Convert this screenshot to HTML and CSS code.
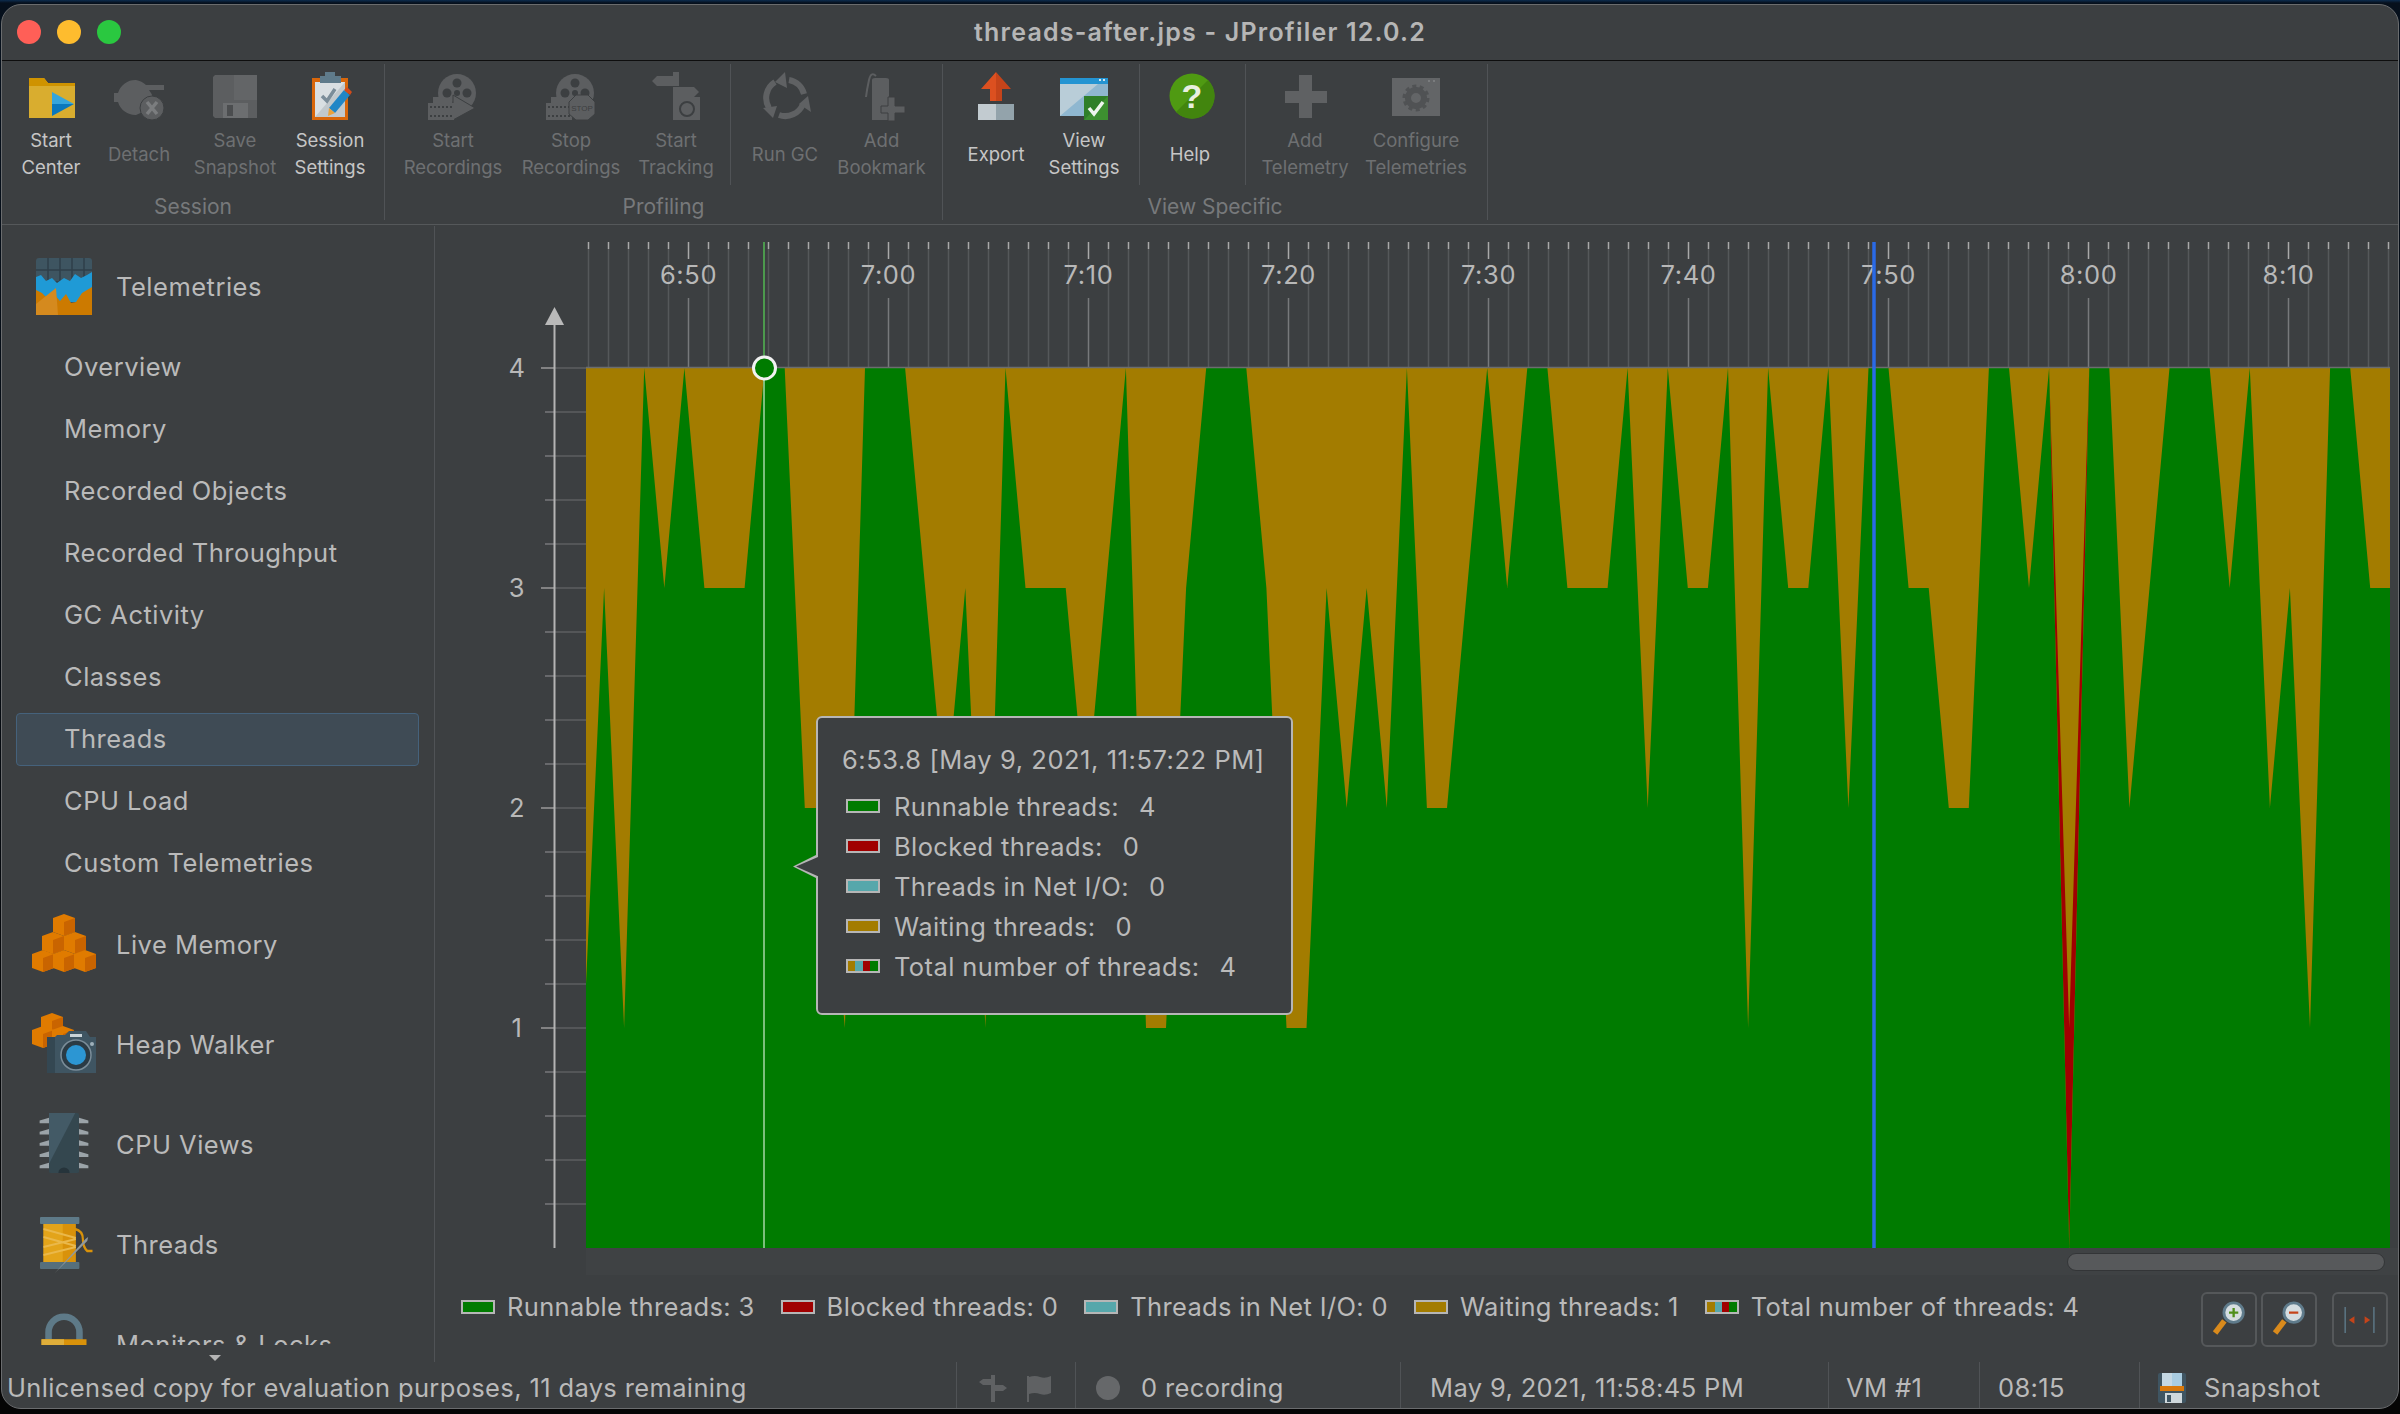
FILE: index.html
```html
<!DOCTYPE html>
<html lang="en">
<head>
  <meta charset="UTF-8">
  <title>threads-after.jps - JProfiler 12.0.2</title>
  <link rel="stylesheet" href="styles.css">
</head>
<body>
  <svg class="defs">
    <defs>
      <symbol id="cube" viewBox="0 0 22 22">
        <polygon points="11,0 22,4 22,18 11,22 0,18 0,4" fill="#e07b00"/>
        <polygon points="11,8 22,4 22,18 11,22" fill="#c96400"/>
      </symbol>
      <g id="reel">
        <circle r="19" fill="#5c5e60"/>
        <circle r="3" fill="#3c3f41"/>
        <circle cy="-10" r="4.5" fill="#3c3f41"/>
        <circle cy="10" r="4.5" fill="#3c3f41"/>
        <circle cx="-10" r="4.5" fill="#3c3f41"/>
        <circle cx="10" r="4.5" fill="#3c3f41"/>
      </g>
      <g id="film">
        <rect width="26" height="17" fill="#5c5e60"/>
        <rect x="5" y="-6" width="9" height="7" fill="#5c5e60"/>
        <path d="M2 4h22M2 13h22" stroke="#3c3f41" stroke-width="2" stroke-dasharray="2 2"/>
      </g>
    </defs>
  </svg>

  <div class="window">
    <header class="titlebar">
      <div class="lights">
        <span class="light red"></span>
        <span class="light yellow"></span>
        <span class="light green"></span>
      </div>
      <div class="title">threads-after.jps - JProfiler 12.0.2</div>
    </header>

    <div class="toolbar">
      <section class="group group-session">
        <div class="tools">
          <div class="set set-session">
            <div class="tool">
              <svg class="tool-icon" viewBox="0 0 60 56">
                <path d="M8 10h15l4 5h27v35H8z" fill="#d9ad2f"/>
                <path d="M8 10h15l4 5h27v3H8z" fill="#cf9300"/>
                <polygon points="31,24 53,36 31,36" fill="#35a5dc"/>
                <polygon points="31,36 53,36 31,48" fill="#0a78bd"/>
              </svg>
              <div class="tool-label">Start<br>Center</div>
            </div>
            <div class="tool off">
              <svg class="tool-icon" viewBox="0 0 60 56">
                <path d="M27 9v3a18 18 0 0 0-18 13H5v9h4a18 18 0 0 0 18 13z" fill="#5c5e60"/>
                <path d="M27 12a18 18 0 0 1 10 5h18v5H40a18 18 0 0 1 3 18l-16 7z" fill="#5c5e60"/>
                <circle cx="43" cy="40" r="12" fill="#5c5e60" stroke="#3c3f41" stroke-width="1"/>
                <path d="M38 34l10 12M48 34L38 46" stroke="#7b7d7f" stroke-width="3.5"/>
              </svg>
              <div class="tool-label">Detach</div>
            </div>
            <div class="tool off">
              <svg class="tool-icon" viewBox="0 0 60 56">
                <path d="M10 7h42v43H10l-2-2V9z" fill="#5c5e60"/>
                <rect x="29" y="7" width="23" height="25" fill="#636567"/>
                <rect x="18" y="35" width="25" height="15" fill="#6c6e70"/>
                <rect x="22" y="37" width="6" height="11" fill="#4b4d4f"/>
              </svg>
              <div class="tool-label">Save<br>Snapshot</div>
            </div>
            <div class="tool">
              <svg class="tool-icon" viewBox="0 0 60 56">
                <rect x="12" y="10" width="36" height="42" fill="#d8660a"/>
                <rect x="15" y="14" width="30" height="35" fill="#d9dfe2"/>
                <polygon points="15,49 45,14 45,49" fill="#c1c8cc"/>
                <path d="M25 4h10v4h6v7H20V8h5z" fill="#5f7b8b"/>
                <path d="M22 28l5 5 8-12" fill="none" stroke="#7b8d99" stroke-width="3.5"/>
                <polygon points="44,22 50,27 35,45 29,40" fill="#2186c6"/>
                <polygon points="44,22 47,19 52,24 50,27" fill="#d24b1a"/>
                <polygon points="29,40 35,45 28,48" fill="#e9a23c"/>
              </svg>
              <div class="tool-label">Session<br>Settings</div>
            </div>
          </div>
        </div>
        <div class="group-label">Session</div>
      </section>

      <section class="group group-profiling">
        <div class="tools">
          <div class="set set-rec">
            <div class="tool off">
              <svg class="tool-icon" viewBox="0 0 60 56">
                <use href="#reel" x="34" y="25"/>
                <polygon points="30,27 52,40 30,52" fill="#5c5e60" stroke="#3c3f41"/>
                <use href="#film" x="5" y="35"/>
              </svg>
              <div class="tool-label">Start<br>Recordings</div>
            </div>
            <div class="tool off">
              <svg class="tool-icon" viewBox="0 0 60 56">
                <use href="#reel" x="34" y="25"/>
                <use href="#film" x="5" y="35"/>
                <polygon points="35,27 47,27 54,34 54,46 47,52 35,52 28,46 28,34" fill="#5c5e60" stroke="#3c3f41"/>
                <text class="stop" x="41" y="43" text-anchor="middle">STOP</text>
              </svg>
              <div class="tool-label">Stop<br>Recordings</div>
            </div>
            <div class="tool off">
              <svg class="tool-icon" viewBox="0 0 60 56">
                <path d="M27 4h6v4h-6zM11 8h22v10H11l-5-5z" fill="#5c5e60"/>
                <path d="M27 19h21l5 5-5 5H27z" fill="#5c5e60"/>
                <rect x="27" y="29" width="27" height="23" fill="#5c5e60"/>
                <circle cx="41" cy="41" r="7" fill="none" stroke="#3c3f41" stroke-width="2"/>
              </svg>
              <div class="tool-label">Start<br>Tracking</div>
            </div>
          </div>
          <div class="set set-gc">
            <div class="tool off">
              <svg class="tool-icon" viewBox="0 0 60 56">
                <path d="M34 12a19 19 0 0 1 15 14M48 36a19 19 0 0 1-24 11M14 40a19 19 0 0 1 6-26" fill="none" stroke="#5f6163" stroke-width="6"/>
                <polygon points="30,4 32,20 20,14" fill="#5f6163"/>
                <polygon points="53,28 44,36 56,44" fill="#5f6163"/>
                <polygon points="8,40 22,38 18,50" fill="#5f6163"/>
              </svg>
              <div class="tool-label">Run GC</div>
            </div>
            <div class="tool off">
              <svg class="tool-icon" viewBox="0 0 60 56">
                <path d="M20 12q0-2 3-2h11q3 0 3 2v40H20z" fill="#5c5e60"/>
                <path d="M24 8q-5-5-7 4t-3 17" fill="none" stroke="#5c5e60" stroke-width="2"/>
                <path d="M36 29h7v9h10v7H43v8h-7v-8H29v-7h7z" fill="#5c5e60" stroke="#3c3f41"/>
              </svg>
              <div class="tool-label">Add<br>Bookmark</div>
            </div>
          </div>
        </div>
        <div class="group-label">Profiling</div>
      </section>

      <section class="group group-view">
        <div class="tools">
          <div class="set set-export">
            <div class="tool">
              <svg class="tool-icon" viewBox="0 0 60 56">
                <polygon points="30,4 45,21 36,21 36,33 30,33" fill="#c5441a"/>
                <polygon points="30,4 15,21 24,21 24,33 30,33" fill="#dc5020"/>
                <rect x="12" y="36" width="18" height="16" fill="#c2cbd0"/>
                <rect x="30" y="36" width="18" height="16" fill="#93a3ab"/>
              </svg>
              <div class="tool-label">Export</div>
            </div>
            <div class="tool">
              <svg class="tool-icon" viewBox="0 0 60 56">
                <rect x="6" y="10" width="48" height="38" fill="#b9cdd8"/>
                <polygon points="6,48 44,16 54,16 54,48" fill="#8fb7d0"/>
                <rect x="6" y="10" width="48" height="6" fill="#2494d2"/>
                <path d="M45 12h2M49 12h2" stroke="#d5e6f0" stroke-width="2"/>
                <rect x="30" y="28" width="24" height="24" fill="#2f7f29"/>
                <polygon points="54,28 54,52 30,52" fill="#3d9030"/>
                <path d="M35 40l5 6 9-12" fill="none" stroke="#eef5ee" stroke-width="3.5"/>
              </svg>
              <div class="tool-label">View<br>Settings</div>
            </div>
          </div>
          <div class="set set-help">
            <div class="tool">
              <svg class="tool-icon" viewBox="0 0 60 56">
                <circle cx="32" cy="28" r="22.5" fill="#4f9a12"/>
                <path d="M48 12a22.5 22.5 0 0 1-32 32z" fill="#42850e"/>
                <text class="help-mark" x="32" y="40" text-anchor="middle">?</text>
              </svg>
              <div class="tool-label">Help</div>
            </div>
          </div>
          <div class="set set-add">
            <div class="tool off">
              <svg class="tool-icon" viewBox="0 0 60 56">
                <path d="M24 7h13v16h15v12H37v15H24V35H10V23h14z" fill="#5f6163"/>
              </svg>
              <div class="tool-label">Add<br>Telemetry</div>
            </div>
            <div class="tool off">
              <svg class="tool-icon" viewBox="0 0 60 56">
                <rect x="6" y="10" width="48" height="38" fill="#636567"/>
                <path d="M42 13h2M47 13h2" stroke="#7a7c7e" stroke-width="2"/>
                <circle cx="30" cy="30" r="8" fill="none" stroke="#505254" stroke-width="6"/>
                <circle cx="30" cy="30" r="12" fill="none" stroke="#505254" stroke-width="3" stroke-dasharray="4 3.5"/>
              </svg>
              <div class="tool-label">Configure<br>Telemetries</div>
            </div>
          </div>
        </div>
        <div class="group-label">View Specific</div>
      </section>
    </div>

    <div class="content">
      <nav class="sidebar">
        <div class="nav-section nav-head">
          <svg class="nav-icon" viewBox="0 0 56 57">
            <rect width="56" height="57" rx="3" fill="#3e5561"/>
            <path d="M0 12h56M0 24h56M12 0v30M24 0v30M36 0v30M48 0v30" stroke="#2f3f49" stroke-width="1.5"/>
            <path d="M0 19l5-2 5 6 6-3 5 5 7-5 6 3 5-7 6 4 6-3 5-3v30H0z" fill="#1f9ad6"/>
            <path d="M0 32l6 3 5 5 7-4 6 7 6-7 5 9 5-1 6-9 5-3 5-3v35H0z" fill="#cc7a00"/>
            <polygon points="0,57 0,46 20,30 22,57" fill="#d58a1e"/>
          </svg>
          <span>Telemetries</span>
        </div>
        <a class="nav-item">Overview</a>
        <a class="nav-item">Memory</a>
        <a class="nav-item">Recorded Objects</a>
        <a class="nav-item">Recorded Throughput</a>
        <a class="nav-item">GC Activity</a>
        <a class="nav-item">Classes</a>
        <a class="nav-item selected">Threads</a>
        <a class="nav-item">CPU Load</a>
        <a class="nav-item">Custom Telemetries</a>

        <div class="nav-section">
          <svg class="nav-icon" viewBox="0 0 64 58">
            <use href="#cube" x="21" y="0" width="22" height="22"/>
            <use href="#cube" x="10" y="18" width="22" height="22"/>
            <use href="#cube" x="32" y="18" width="22" height="22"/>
            <use href="#cube" x="0" y="36" width="22" height="22"/>
            <use href="#cube" x="21" y="36" width="22" height="22"/>
            <use href="#cube" x="42" y="36" width="22" height="22"/>
          </svg>
          <span>Live Memory</span>
        </div>
        <div class="nav-section">
          <svg class="nav-icon" viewBox="0 0 64 60">
            <use href="#cube" x="9" y="0" width="22" height="22"/>
            <use href="#cube" x="0" y="13" width="22" height="22"/>
            <use href="#cube" x="20" y="13" width="22" height="22"/>
            <path d="M15 24h8l2-2h8l4-4h17l4 6h6v36H15z" fill="#3f5562"/>
            <path d="M15 60V24h8v36z" fill="#344752"/>
            <rect x="38" y="21" width="12" height="3" fill="#c9d3d8"/>
            <circle cx="44" cy="42" r="15" fill="#2b3b45" stroke="#7b8d99" stroke-width="1.5"/>
            <circle cx="44" cy="42" r="10" fill="#2c96d3"/>
            <circle cx="60" cy="31" r="2" fill="#9fb0ba"/>
          </svg>
          <span>Heap Walker</span>
        </div>
        <div class="nav-section">
          <svg class="nav-icon" viewBox="0 0 64 64">
            <path d="M6 8l10-3v6l-10 0zM6 20l10-3v6H6zM6 32l10-3v6H6zM6 44l10-3v6H6zM6 56l10-3v6H6z" fill="#9ba3a8"/>
            <path d="M58 8l-10-3v6h10zM58 20l-10-3v6h10zM58 32l-10-3v6h10zM58 44l-10-3v6h10zM58 56l-10-3v6h10z" fill="#9ba3a8"/>
            <rect x="16" y="0" width="32" height="64" rx="2" fill="#34474f"/>
            <polygon points="16,0 44,0 16,54" fill="#435a66"/>
            <path d="M26 64a6 6 0 0 1 12 0z" fill="#26343b"/>
          </svg>
          <span>CPU Views</span>
        </div>
        <div class="nav-section">
          <svg class="nav-icon" viewBox="0 0 64 60">
            <g transform="translate(8 0) scale(.875 1)">
              <rect x="4" y="11" width="37" height="38" fill="#d9920a"/>
              <rect x="4" y="11" width="22" height="38" fill="#e3a41a"/>
              <path d="M4 16l37 9M4 24l37 9M4 34l37-8M4 42l37-8" stroke="#eab84a" stroke-width="2"/>
              <rect y="4" width="45" height="7" rx="1" fill="#5e7a88"/>
              <rect y="49" width="45" height="7" rx="1" fill="#566f7c"/>
              <path d="M40 16q9 2 9 10t5 12h6" fill="none" stroke="#d9920a" stroke-width="2.5"/>
              <polygon points="17,60 52,26 55,24 54,28" fill="#8f989d"/>
            </g>
          </svg>
          <span>Threads</span>
        </div>
        <div class="nav-section">
          <svg class="nav-icon" viewBox="0 0 64 64">
            <path d="M15.5 30V20.5a16.5 16.5 0 0 1 33 0V30" fill="none" stroke="#5e7a88" stroke-width="7"/>
            <rect x="8" y="28" width="48" height="30" fill="#d9920a"/>
            <rect x="8" y="28" width="24" height="30" fill="#dfae3a"/>
          </svg>
          <span>Monitors &amp; Locks</span>
        </div>
      </nav>
      <div class="nav-more"></div>

      <main class="main">
        <div class="chart-wrap">
          <svg id="chart" class="chart" viewBox="435 225 1963 1023"></svg>
          <div class="tooltip">
            <span class="tip-arrow"></span>
            <div class="tip-time">6:53.8 [May 9, 2021, 11:57:22 PM]</div>
            <div class="tip-row"><i class="swatch runnable"></i>Runnable threads:<b>4</b></div>
            <div class="tip-row"><i class="swatch blocked"></i>Blocked threads:<b>0</b></div>
            <div class="tip-row"><i class="swatch netio"></i>Threads in Net I/O:<b>0</b></div>
            <div class="tip-row"><i class="swatch waiting"></i>Waiting threads:<b>0</b></div>
            <div class="tip-row"><i class="swatch total"></i>Total number of threads:<b>4</b></div>
          </div>
        </div>
        <div class="hscroll"><div class="hscroll-thumb"></div></div>
        <div class="legend-row">
          <div class="legend">
            <span class="legend-item"><i class="swatch runnable"></i>Runnable threads: 3</span>
            <span class="legend-item"><i class="swatch blocked"></i>Blocked threads: 0</span>
            <span class="legend-item"><i class="swatch netio"></i>Threads in Net I/O: 0</span>
            <span class="legend-item"><i class="swatch waiting"></i>Waiting threads: 1</span>
            <span class="legend-item"><i class="swatch total"></i>Total number of threads: 4</span>
          </div>
          <div class="zoom-btns">
            <button class="zoom-btn">
              <svg viewBox="0 0 56 55">
                <path d="M13 42l10-13" stroke="#d98a1c" stroke-width="6"/>
                <circle cx="33" cy="20" r="10.5" fill="#d5dde0" stroke="#5f7b8b" stroke-width="3"/>
                <path d="M28 20h10M33 15v10" stroke="#4f8f1c" stroke-width="2.5"/>
              </svg>
            </button>
            <button class="zoom-btn">
              <svg viewBox="0 0 56 55">
                <path d="M13 42l10-13" stroke="#d98a1c" stroke-width="6"/>
                <circle cx="33" cy="20" r="10.5" fill="#d5dde0" stroke="#5f7b8b" stroke-width="3"/>
                <path d="M28 20h10" stroke="#c5441a" stroke-width="2.5"/>
              </svg>
            </button>
            <button class="zoom-btn zoom-fit">
              <svg viewBox="0 0 56 55">
                <path d="M12 14v28M43 14v28" stroke="#5f7b8b" stroke-width="1.5"/>
                <polygon points="16,28 22,24 22,32" fill="#c5441a"/>
                <polygon points="39,28 33,24 33,32" fill="#c5441a"/>
              </svg>
            </button>
          </div>
        </div>
      </main>
    </div>

    <footer class="statusbar">
      <div class="stat stat-msg">Unlicensed copy for evaluation purposes, 11 days remaining</div>
      <div class="stat stat-icons">
        <svg width="30" height="28" viewBox="0 0 30 28">
          <path d="M13 1h4v4h-4zM5 5h12v6H5L1 8zM13 11h12l4 3-4 3H17v11h-4z" fill="#5f6163"/>
        </svg>
        <svg width="26" height="28" viewBox="0 0 26 28">
          <path d="M1 2h2v26H1zM3 3q6-2 11 0t11-1v17q-6 3-11 1t-11 0z" fill="#5f6163"/>
        </svg>
      </div>
      <div class="stat stat-rec"><span class="rec-dot"></span>0 recording</div>
      <div class="stat stat-date">May 9, 2021, 11:58:45 PM</div>
      <div class="stat stat-vm">VM #1</div>
      <div class="stat stat-time">08:15</div>
      <div class="stat stat-snap">
        <svg width="28" height="30" viewBox="0 0 28 30">
          <rect width="28" height="30" rx="2" fill="#3f5562"/>
          <rect x="4" width="20" height="13" fill="#a9cce0"/>
          <rect x="4" width="10" height="13" fill="#c5d8e3"/>
          <rect x="2" y="13" width="24" height="5" fill="#d9780a"/>
          <rect x="7" y="20" width="17" height="10" fill="#cfd8dc"/>
          <rect x="9" y="22" width="4" height="7" fill="#3f5562"/>
        </svg>
        <span>Snapshot</span>
      </div>
    </footer>
  </div>

  <script src="chart.js"></script>
</body>
</html>
```

FILE: styles.css
```css
/* Reset */
* {
  margin: 0;
  padding: 0;
  box-sizing: border-box;
}

body {
  width: 2400px;
  height: 1414px;
  overflow: hidden;
  padding: 4px 1px 0;
  background: linear-gradient(180deg, #0d2c4e 0, #06101c 3px, #050505 1408px);
  font-family: Inter, "Noto Sans", sans-serif;
  color: #bababa;
}

.defs {
  position: absolute;
  width: 0;
  height: 0;
}

.window {
  display: flex;
  flex-direction: column;
  height: 1405px;
  background: #3c3f41;
  border: 1px solid #6a6c6e;
  border-radius: 20px;
  overflow: hidden;
}

/* Title bar */
.titlebar {
  position: relative;
  flex: 0 0 56px;
  display: flex;
  align-items: center;
  justify-content: center;
  padding-bottom: 2px;
  border-bottom: 1px solid #0e0e0e;
}

.lights {
  position: absolute;
  left: 15px;
  top: 15px;
  display: flex;
  gap: 16px;
}

.light {
  width: 24px;
  height: 24px;
  border-radius: 50%;
}

.light.red { background: #ff5f57; }
.light.yellow { background: #febc2e; }
.light.green { background: #2ac840; }

.title {
  font-size: 25px;
  font-weight: 600;
  letter-spacing: 1.2px;
  color: #b6b6b6;
}

/* Toolbar */
.toolbar {
  flex: 0 0 164px;
  display: flex;
  border-bottom: 1px solid #55585a;
}

.group {
  display: flex;
  flex-direction: column;
  height: 156px;
  margin-top: 3px;
  border-right: 1px solid #505356;
}

.group-session { width: 383px; }
.group-profiling { width: 558px; }
.group-view { width: 545px; }

.tools {
  display: flex;
  height: 121px;
}

.set {
  display: grid;
  border-right: 1px solid #505356;
}

.set:last-child { border-right: none; }

.set-session { grid-template-columns: 98px 78px 114px 76px; }
.set-rec { width: 346px; grid-template-columns: 136px 100px 110px; }
.set-gc { grid-template-columns: 108px 85px; }
.set-export { width: 197px; grid-template-columns: 106px 70px; }
.set-help { width: 106px; grid-template-columns: 100px; }
.set-add { grid-template-columns: 118px 104px; }

.tool {
  display: flex;
  flex-direction: column;
  align-items: center;
  padding-top: 4px;
  white-space: nowrap;
}

.tool-icon {
  width: 60px;
  height: 56px;
  flex: none;
}

.tool-label {
  height: 54px;
  margin-top: 3px;
  display: flex;
  align-items: center;
  text-align: center;
  font-size: 18.5px;
  line-height: 27px;
  color: #c6c6c6;
}

.tool.off .tool-label { color: #6e7072; }

.group-label {
  padding-top: 9px;
  text-align: center;
  font-size: 21px;
  line-height: 26px;
  color: #77797b;
}

.stop {
  font-family: "Liberation Sans", sans-serif;
  font-size: 8px;
  fill: #3c3f41;
}

.help-mark {
  font-family: "Liberation Sans", sans-serif;
  font-size: 34px;
  font-weight: 700;
  fill: #e8efe0;
}

/* Left navigation */
.content {
  position: relative;
  flex: 1;
  display: flex;
  min-height: 0;
}

.sidebar {
  flex: 0 0 433px;
  display: flex;
  flex-direction: column;
  height: 1120px;
  overflow: hidden;
  font-size: 25.5px;
  letter-spacing: 0.5px;
}

.nav-more {
  position: absolute;
  left: 207px;
  top: 1130px;
  border-left: 6px solid transparent;
  border-right: 6px solid transparent;
  border-top: 6px solid #b5b5b5;
}

.nav-section {
  position: relative;
  flex: none;
  display: flex;
  align-items: center;
  height: 100px;
  padding-left: 114px;
}

.nav-head {
  height: 111px;
  padding-top: 12px;
}

.nav-icon {
  position: absolute;
  left: 30px;
  top: 19px;
  width: 64px;
  height: 60px;
}

.nav-head .nav-icon {
  left: 34px;
  top: 33px;
  width: 56px;
  height: 57px;
}

.nav-item {
  flex: none;
  display: block;
  height: 53px;
  margin: 4.5px 16px 4.5px 14px;
  padding-left: 48px;
  line-height: 51px;
}

.nav-item.selected {
  background: #3f4b55;
  border: 1px solid #45627c;
  border-radius: 4px;
  padding-left: 47px;
  line-height: 49px;
}

.content::before {
  content: "";
  position: absolute;
  left: 432px;
  top: 1px;
  bottom: 0;
  width: 1px;
  background: #505356;
}

/* Chart */
.main {
  flex: 1;
  display: flex;
  flex-direction: column;
  min-width: 0;
}

.chart-wrap {
  position: relative;
  height: 1023px;
}

.chart {
  display: block;
  width: 1963px;
  height: 1023px;
  font-family: Inter, "Noto Sans", sans-serif;
}

.axis-label {
  font-size: 25.5px;
  letter-spacing: 0.6px;
  fill: #b8b8b8;
}

.tooltip {
  position: absolute;
  left: 381px;
  top: 491px;
  width: 477px;
  height: 299px;
  padding: 22px 0 0 24px;
  background: #3c3f41;
  border: 2px solid #b6b6b6;
  border-radius: 6px;
  font-size: 25.5px;
  letter-spacing: 0.4px;
}

.tip-arrow {
  position: absolute;
  left: -25px;
  top: 136px;
  width: 25px;
  height: 25px;
  background: #b6b6b6;
  clip-path: polygon(0 50%, 100% 0, 100% 100%);
}

.tip-arrow::after {
  content: "";
  position: absolute;
  left: 3px;
  top: 2px;
  width: 24px;
  height: 21px;
  background: #3c3f41;
  clip-path: polygon(0 50%, 100% 0, 100% 100%);
}

.tip-time {
  height: 40px;
  line-height: 40px;
  margin-bottom: 6px;
  letter-spacing: 0.55px;
}

.tip-row {
  display: flex;
  align-items: center;
  height: 40px;
  padding-left: 4px;
}

.tip-row b {
  margin-left: 20px;
  font-weight: 400;
}

.tip-row .swatch { margin-right: 14px; }

.swatch {
  display: inline-block;
  flex: none;
  width: 34px;
  height: 14px;
  border: 2px solid #b6b6b6;
}

.swatch.runnable { background: #007b00; }
.swatch.blocked { background: #a00000; }
.swatch.netio { background: #56a7ab; }
.swatch.waiting { background: #a37c00; }
.swatch.total {
  background: linear-gradient(90deg, #a37c00 25%, #56a7ab 25% 50%, #a00000 50% 75%, #007b00 75%);
}

/* Horizontal scroll bar */
.hscroll {
  height: 27px;
  margin-left: 151px;
  padding: 5px 0 0 1481px;
  background: #3f4244;
}

.hscroll-thumb {
  width: 318px;
  height: 18px;
  background: #57595b;
  border: 1px solid #333537;
  border-radius: 9px;
}

/* Legend row */
.legend-row {
  flex: 1;
  display: flex;
  justify-content: space-between;
  align-items: flex-start;
  padding: 17px 10px 0 26px;
}

.legend {
  display: flex;
  gap: 26px;
  font-size: 25.5px;
  letter-spacing: 0.34px;
  line-height: 30px;
}

.legend-item {
  display: flex;
  align-items: center;
  gap: 12px;
  white-space: nowrap;
}

.zoom-btns {
  display: flex;
  gap: 4px;
}

.zoom-btn {
  width: 56px;
  height: 55px;
  background: none;
  border: 2px solid #55585a;
  border-radius: 6px;
}

.zoom-btn svg {
  display: block;
  width: 100%;
  height: 100%;
}

.zoom-fit { margin-left: 11px; }

/* Status bar */
.statusbar {
  flex: 0 0 43px;
  display: flex;
  align-items: stretch;
  font-size: 25.5px;
  letter-spacing: 0.36px;
  line-height: 41px;
}

.stat {
  display: flex;
  align-items: center;
  padding-top: 5px;
  white-space: nowrap;
  border-left: 1px solid #505356;
}

.stat-msg { width: 954px; padding-left: 5px; border-left: none; }
.stat-icons { width: 119px; padding-left: 21px; gap: 18px; }
.stat-rec { width: 325px; padding-left: 20px; }
.stat-date { width: 428px; padding-left: 29px; }
.stat-vm { width: 151px; padding-left: 17px; }
.stat-time { width: 160px; padding-left: 18px; }
.stat-snap { flex: 1; padding-left: 18px; gap: 18px; }

.rec-dot {
  width: 24px;
  height: 24px;
  margin-right: 21px;
  border-radius: 50%;
  background: #66686a;
}
```

FILE: chart.js
```js
// thread counts per sample, read off the graph
const runnable = [1,3,1,4,3,4,3,3,3,4,4,2,2,1,4,4,4,3,2,3,1,4,3,3,3,2,3,4,1,1,3,4,4,4,3,1,1,3,2,3,2,4,2,2,3,4,3,4,4,3,3,3,4,2,4,3,3,4,1,4,3,3,4,2,4,4,3,3,2,2,4,4,3,4,0,4,4,2,3,4,4,4,3,4,2,3,1,4,4,3,3];
const labels = ['6:50','7:00','7:10','7:20','7:30','7:40','7:50','8:00','8:10'];

const sx = k => 584 + 20.07 * k;
const sy = v => 1248 - 220 * v;

function line(x1, y1, x2, y2, color, w) {
  return `<line x1="${x1}" y1="${y1}" x2="${x2}" y2="${y2}" stroke="${color}" stroke-width="${w || 1.5}"/>`;
}

let out = '<clipPath id="plot"><rect x="586" y="368" width="1804" height="880"/></clipPath>';

// time ruler
for (let i = 0; i <= 90; i++) {
  const x = 588.5 + 20 * i;
  const major = i % 10 === 5;
  out += line(x, 242, x, major ? 259 : 249, '#a9a9a9');
  out += line(x, major ? 298 : 249, x, 368, major ? '#77797b' : '#55585a');
}
labels.forEach((t, i) => {
  out += `<text class="axis-label" x="${688.5 + 200 * i}" y="284" text-anchor="middle">${t}</text>`;
});

// value axis
for (let i = 0; i < 20; i++) {
  const y = 368 + 44 * i;
  const major = i % 5 === 0;
  out += line(major ? 541 : 545, y, 554, y, major ? '#9a9a9a' : '#77797b');
  out += line(554, y, 586, y, '#5c5f61');
}
out += line(554.5, 322, 554.5, 1248, '#b4b4b4', 2);
out += '<polygon points="554.5,307 564,325 545,325" fill="#b9b9b9"/>';
[4, 3, 2, 1].forEach(v => {
  out += `<text class="axis-label" x="517" y="${sy(v) + 9}" text-anchor="middle">${v}</text>`;
});

// stacked areas
let pts = runnable.map((v, k) => `${sx(k).toFixed(1)},${sy(v)}`).join(' ');
pts += ` ${sx(90)},1248 ${sx(0)},1248`;
const peak = 74;
const red = `${sx(peak - 1)},${sy(4)} ${sx(peak)},${sy(1)} ${sx(peak + 1)},${sy(4)} ${sx(peak)},${sy(0)}`;
out += '<g clip-path="url(#plot)">';
out += '<rect x="586" y="368" width="1804" height="880" fill="#a37c00"/>';
out += `<polygon points="${red}" fill="#a00000"/>`;
out += `<polygon points="${pts}" fill="#007b00"/>`;
out += '</g>';
out += line(586, 367.5, 2390, 367.5, '#6b6d6f');

// crosshair and range marker
out += line(764, 242, 764, 368, '#52b852');
out += line(764, 368, 764, 1248, '#a5d6a5');
out += '<circle cx="764.5" cy="368" r="11" fill="#007b00" stroke="#f2f2f2" stroke-width="3"/>';
out += line(1874, 242, 1874, 1248, '#2a6ae6', 3.5);

document.getElementById('chart').innerHTML = out;
```
